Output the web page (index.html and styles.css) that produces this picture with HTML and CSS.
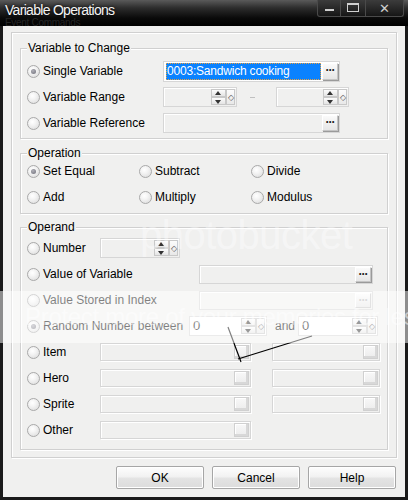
FILE: index.html
```html
<!DOCTYPE html>
<html>
<head>
<meta charset="utf-8">
<link rel="stylesheet" href="styles.css">
</head>
<body>
<div class="window">
  <div class="titlebar">
    <div class="titles">
      <span class="title">Variable Operations</span>
      <span class="ghost">Event Commands</span>
    </div>
    <div class="caption-btns">
      <span class="cbtn min"><span class="min-glyph"></span></span>
      <span class="cbtn max"><span class="max-glyph"></span></span>
      <span class="cbtn close">✕</span>
    </div>
  </div>
  <div class="frame">
    <div class="client">
      <div class="panel">
        <div class="group g1">
          <span class="legend">Variable to Change</span>
          <div class="row">
            <label class="radio w136 checked"><span class="dot"></span>Single Variable</label>
            <div class="picker active">
              <span class="sel">0003:Sandwich cooking</span>
              <span class="dots">···</span>
            </div>
          </div>
          <div class="row">
            <label class="radio w136"><span class="dot"></span>Variable Range</label>
            <div class="spin s74">
              <span class="spin-text"></span>
              <span class="arrows"><span class="up"></span><span class="down"></span></span>
              <span class="dia">◇</span>
            </div>
            <span class="dash"></span>
            <div class="spin s73">
              <span class="spin-text"></span>
              <span class="arrows"><span class="up"></span><span class="down"></span></span>
              <span class="dia">◇</span>
            </div>
          </div>
          <div class="row">
            <label class="radio w136"><span class="dot"></span>Variable Reference</label>
            <div class="picker">
              <span class="sel-empty"></span>
              <span class="dots">···</span>
            </div>
          </div>
        </div>

        <div class="group g2">
          <span class="legend">Operation</span>
          <div class="row">
            <label class="radio w112 checked"><span class="dot"></span>Set Equal</label>
            <label class="radio w112"><span class="dot"></span>Subtract</label>
            <label class="radio w112"><span class="dot"></span>Divide</label>
          </div>
          <div class="row">
            <label class="radio w112"><span class="dot"></span>Add</label>
            <label class="radio w112"><span class="dot"></span>Multiply</label>
            <label class="radio w112"><span class="dot"></span>Modulus</label>
          </div>
        </div>

        <div class="group g3">
          <span class="legend">Operand</span>
          <div class="row">
            <label class="radio w73"><span class="dot"></span>Number</label>
            <div class="spin s80">
              <span class="spin-text"></span>
              <span class="arrows"><span class="up"></span><span class="down"></span></span>
              <span class="dia">◇</span>
            </div>
          </div>
          <div class="row">
            <label class="radio w172"><span class="dot"></span>Value of Variable</label>
            <div class="picker p174">
              <span class="sel-empty"></span>
              <span class="dots">···</span>
            </div>
          </div>
          <div class="row">
            <label class="radio w172"><span class="dot"></span>Value Stored in Index</label>
            <div class="picker p174">
              <span class="sel-empty"></span>
              <span class="dots faded">···</span>
            </div>
          </div>
          <div class="row">
            <label class="radio w162 checked"><span class="dot"></span>Random Number between</label>
            <div class="spin s78 white">
              <span class="spin-text">0</span>
              <span class="arrows"><span class="up"></span><span class="down"></span></span>
              <span class="dia">◇</span>
            </div>
            <span class="and">and</span>
            <div class="spin s80 white">
              <span class="spin-text">0</span>
              <span class="arrows"><span class="up"></span><span class="down"></span></span>
              <span class="dia">◇</span>
            </div>
          </div>
          <div class="row">
            <label class="radio w73"><span class="dot"></span>Item</label>
            <div class="box b151"><span class="sq"></span></div>
            <div class="box b108"><span class="sq"></span></div>
          </div>
          <div class="row">
            <label class="radio w73"><span class="dot"></span>Hero</label>
            <div class="box b151"><span class="sq"></span></div>
            <div class="box b108"><span class="sq"></span></div>
          </div>
          <div class="row">
            <label class="radio w73"><span class="dot"></span>Sprite</label>
            <div class="box b151"><span class="sq"></span></div>
            <div class="box b108"><span class="sq"></span></div>
          </div>
          <div class="row">
            <label class="radio w73"><span class="dot"></span>Other</label>
            <div class="box b151"><span class="sq"></span></div>
          </div>
        </div>
      </div>
      <div class="buttons">
        <span class="btn">OK</span>
        <span class="btn">Cancel</span>
        <span class="btn">Help</span>
      </div>
    </div>
  </div>

  <div class="wm-logo">photobucket</div>
  <svg class="annot" width="408" height="500" viewBox="0 0 408 500">
    <path d="M228 327 L241 362" stroke="#000" stroke-width="1.2" fill="none"/>
    <path d="M238 359 L312 336" stroke="#000" stroke-width="1.2" fill="none"/>
  </svg>
  <div class="wm-band"><span class="wm-text">Protect more of your memories for less!</span></div>
</div>
</body>
</html>
```

FILE: styles.css
```css
* { box-sizing: border-box; }
html, body { margin: 0; padding: 0; background: #000; }
body {
  font-family: "Liberation Sans", Arial, sans-serif;
  font-size: 12px;
  color: #000;
}
.window {
  position: relative;
  width: 408px;
  height: 500px;
  overflow: hidden;
  background: #111;
}
.titlebar {
  height: 26px;
  display: flex;
  justify-content: space-between;
  background: linear-gradient(#5a5a5a 0px, #2c2c2c 8px, #0a0a0a 18px, #000 26px);
}
.titles {
  display: flex;
  flex-direction: column;
  padding: 3px 0 0 5px;
}
.title {
  color: #f4f4f4;
  font-size: 14px;
  letter-spacing: -0.7px;
  line-height: 15px;
  text-shadow: 0 0 3px rgba(0,0,0,0.9);
}
.ghost {
  color: #262626;
  font-size: 10px;
  letter-spacing: -0.3px;
  line-height: 8px;
  margin-top: 1px;
}
.caption-btns {
  display: flex;
  padding-right: 4px;
  height: 17px;
}
.cbtn {
  display: flex;
  align-items: center;
  justify-content: center;
  height: 17px;
  border: 1px solid #4a4a4a;
  border-top: none;
  background: linear-gradient(#3c3c3c, #161616);
  color: #cfcfcf;
}
.min { width: 24px; border-radius: 0 0 0 3px; }
.max { width: 25px; border-left: none; }
.close { width: 38px; border-left: none; border-radius: 0 0 3px 0; font-size: 13px; }
.min-glyph { width: 9px; height: 2px; background: #cfcfcf; margin-top: 4px; }
.max-glyph { width: 12px; height: 9px; border: 1px solid #cfcfcf; border-top-width: 2px; margin-top: -2px; }

.frame {
  height: 474px;
  padding: 0 3px 3px 3px;
  background: #1a1a1a;
}
.client {
  height: 471px;
  background: #f0f0ef;
  padding: 6px 8px 0 8px;
}
.panel {
  width: 386px;
  height: 426px;
  border: 1px solid #d0d0d0;
  box-shadow: inset 1px 1px 0 #fff, 1px 1px 0 #fff;
  padding: 15px 8px 0 8px;
  display: flex;
  flex-direction: column;
}
.group {
  position: relative;
  width: 368px;
  border: 1px solid #d0d0d0;
  box-shadow: inset 1px 1px 0 #fff, 1px 1px 0 #fff;
  padding-left: 6px;
}
.g1 { height: 91px; padding-top: 9px; }
.g2 { height: 61px; margin-top: 14px; padding-top: 4px; }
.g3 { height: 223px; margin-top: 13px; padding-top: 7px; }
.legend {
  position: absolute;
  top: -8px;
  left: 6px;
  padding: 0 1px;
  background: #f0f0ef;
  line-height: 15px;
}
.row {
  display: flex;
  align-items: center;
  height: 26px;
}
.radio {
  display: flex;
  align-items: center;
  flex: none;
  white-space: nowrap;
}
.dot {
  flex: none;
  width: 13px;
  height: 13px;
  border-radius: 50%;
  margin-right: 3px;
  border: 1px solid #a9a9a9;
  background: radial-gradient(circle at 40% 35%, #fff 0%, #f4f4f4 35%, #d8d8d8 100%);
  display: flex;
  align-items: center;
  justify-content: center;
}
.checked .dot::after {
  content: "";
  width: 5px;
  height: 5px;
  border-radius: 50%;
  background: radial-gradient(circle at 40% 35%, #b0b0b8, #6e6e78);
}
.w136 { width: 136px; }
.w112 { width: 112px; }
.w73 { width: 73px; }
.w172 { width: 172px; }
.w162 { width: 162px; }

.picker {
  display: flex;
  align-items: stretch;
  width: 177px;
  height: 20px;
  border: 1px solid #d6d6d6;
  box-shadow: inset 1px 1px 0 #fff;
  background: #f0f0ef;
  padding: 1px 1px 1px 2px;
}
.picker.active { background: #fff; height: 21px; }
.picker.p174 { width: 174px; height: 19px; }
.sel {
  flex: 1;
  background: #0a82ff;
  color: #fff;
  outline: 1px dotted #e8a040;
  outline-offset: -1px;
  line-height: 17px;
  padding-left: 1px;
  letter-spacing: -0.2px;
  white-space: nowrap;
  overflow: hidden;
}
.sel-empty { flex: 1; }
.dots {
  width: 16px;
  flex: none;
  margin-left: 1px;
  border: 1px solid #c4c4c4;
  border-top-color: #fff;
  border-left-color: #fff;
  box-shadow: 1px 1px 0 #9a9a9a;
  background: linear-gradient(#fafafa, #e6e6e6);
  font-weight: bold;
  font-size: 12px;
  line-height: 12px;
  text-align: center;
  color: #222;
  letter-spacing: -1px;
}
.dots.faded { color: #b8b8b8; box-shadow: none; }

.spin {
  display: flex;
  align-items: stretch;
  height: 20px;
  border: 1px solid #d6d6d6;
  box-shadow: inset 1px 1px 0 #fff;
  background: #f0f0ef;
  padding: 1px 1px 1px 3px;
}
.spin.white { background: #fff; }
.s74 { width: 74px; }
.s73 { width: 73px; }
.s80 { width: 80px; }
.s78 { width: 78px; }
.spin-text { flex: 1; line-height: 16px; font-size: 13px; }
.arrows {
  width: 15px;
  display: flex;
  flex-direction: column;
  flex: none;
}
.up, .down {
  flex: 1;
  border: 1px solid #c8c8c8;
  background: linear-gradient(#fcfcfc, #e4e4e4);
  position: relative;
}
.up::after, .down::after {
  content: "";
  position: absolute;
  left: 3px;
  top: 1px;
  border-left: 3.5px solid transparent;
  border-right: 3.5px solid transparent;
}
.up::after { border-bottom: 4px solid #333; }
.down::after { border-top: 4px solid #333; top: 2px; }
.dia {
  width: 9px;
  flex: none;
  border: 1px solid #c8c8c8;
  background: linear-gradient(#fcfcfc, #e8e8e8);
  font-size: 8px;
  line-height: 16px;
  text-align: center;
  color: #555;
}
.dash {
  width: 5px;
  height: 1px;
  background: #c0c0c0;
  margin: 0 21px 0 13px;
}
.and { margin: 0 6px 0 8px; width: 17px; }

.box {
  display: flex;
  align-items: center;
  justify-content: flex-end;
  height: 18px;
  border: 1px solid #d6d6d6;
  box-shadow: inset 1px 1px 0 #fff, 1px 1px 0 #fff;
  background: #f0f0ef;
  padding-right: 1px;
}
.b151 { width: 151px; margin-right: 21px; }
.b108 { width: 108px; }
.sq {
  width: 15px;
  height: 14px;
  border: 1px solid #d0d0d0;
  background: linear-gradient(#f8f8f8, #ececec);
  box-shadow: inset -2px -2px 0 #d8d8d8, inset 1px 1px 0 #fff;
}

.buttons {
  display: flex;
  justify-content: flex-end;
  gap: 8px;
  padding-right: 1px;
  margin-top: 8px;
}
.btn {
  width: 88px;
  height: 23px;
  border: 1px solid #a6a6a6;
  border-radius: 2px;
  background: linear-gradient(#fdfdfd 0%, #f2f2f2 45%, #e3e3e3 55%, #dcdcdc 100%);
  box-shadow: inset 0 0 0 1px #fff;
  display: flex;
  align-items: center;
  justify-content: center;
}

.wm-logo {
  position: absolute;
  left: 140px;
  top: 213px;
  font-size: 40px;
  letter-spacing: -0.5px;
  color: rgba(255,255,255,0.4);
  pointer-events: none;
}
.annot {
  position: absolute;
  left: 0;
  top: 0;
  pointer-events: none;
}
.wm-band {
  position: absolute;
  left: 0;
  top: 291px;
  width: 408px;
  height: 52px;
  background: rgba(255,255,255,0.5);
  pointer-events: none;
}
.wm-text {
  position: absolute;
  left: 25px;
  top: 12px;
  font-size: 24px;
  letter-spacing: -0.3px;
  white-space: nowrap;
  color: rgba(255,255,255,0.5);
}
```
